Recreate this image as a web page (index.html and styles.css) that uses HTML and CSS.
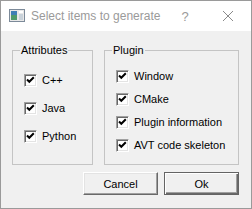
FILE: index.html
```html
<!DOCTYPE html>
<html lang="en">
<head>
  <meta charset="UTF-8">
  <title>Select items to generate</title>
  <link rel="stylesheet" href="styles.css">
</head>
<body>
  <div class="window">
    <div class="titlebar">
      <svg class="app-icon" width="16" height="13" viewBox="0 0 16 13">
        <rect x="0.5" y="0.5" width="15" height="12" fill="#e8e8e8" stroke="#7c8a99"/>
        <rect x="2" y="2" width="6" height="9" fill="#3f7fb5"/>
        <rect x="2" y="6" width="6" height="5" fill="#4f9a6a"/>
        <rect x="10" y="2" width="4" height="2" fill="#ffffff"/>
        <rect x="10" y="5" width="4" height="6" fill="#c9d2da"/>
      </svg>
      <span class="title">Select items to generate</span>
      <span class="help">?</span>
      <svg class="close" width="12" height="12" viewBox="0 0 12 12">
        <path d="M1 1 L11 11 M11 1 L1 11" stroke="#8a8a8a" stroke-width="1"/>
      </svg>
    </div>

    <div class="content">
      <div class="groups">
        <div class="group group-attr">
          <span class="group-title">Attributes</span>
          <div class="options options-attr">
            <label class="option"><span class="check"></span>C++</label>
            <label class="option"><span class="check"></span>Java</label>
            <label class="option"><span class="check"></span>Python</label>
          </div>
        </div>
        <div class="group group-plugin">
          <span class="group-title">Plugin</span>
          <div class="options options-plugin">
            <label class="option"><span class="check"></span>Window</label>
            <label class="option"><span class="check"></span>CMake</label>
            <label class="option"><span class="check"></span>Plugin information</label>
            <label class="option"><span class="check"></span>AVT code skeleton</label>
          </div>
        </div>
      </div>

      <div class="buttons">
        <button class="btn">Cancel</button>
        <button class="btn btn-default">Ok</button>
      </div>
    </div>
  </div>
</body>
</html>
```

FILE: styles.css
```css
body {
  margin: 0;
  font-family: 'Liberation Sans', Arial, sans-serif;
  font-size: 11px;
  color: #000;
  background: #f0f0f0;
}

.window {
  width: 252px;
  height: 209px;
  box-sizing: border-box;
  border: 1px solid #9a9a9a;
  background: #f0f0f0;
}

.titlebar {
  height: 30px;
  background: #ffffff;
  display: flex;
  align-items: center;
}

.app-icon {
  margin-left: 8px;
  margin-top: -1px;
}

.title {
  margin-left: 6px;
  font-size: 12px;
  color: #9a9a9a;
}

.help {
  margin-left: 21px;
  font-size: 13px;
  color: #9a9a9a;
}

.close {
  margin-left: 33px;
  margin-top: -1px;
}

.content {
  padding: 19px 12px 0 11px;
  display: flex;
  flex-direction: column;
}

.groups {
  display: flex;
  gap: 11px;
}

.group {
  height: 115px;
  box-sizing: border-box;
  border: 1px solid #c4c4c4;
  display: flex;
  flex-direction: column;
}

.group-attr {
  width: 81px;
}

.group-plugin {
  flex: 1;
}

.group-title {
  align-self: flex-start;
  margin: -7px 0 0 7px;
  padding: 0 1px;
  line-height: 13px;
  background: #f0f0f0;
}

.options {
  display: flex;
  flex-direction: column;
  padding-left: 11px;
}

.options-attr {
  padding-top: 17px;
  gap: 15px;
}

.options-plugin {
  padding-top: 13px;
  gap: 10px;
}

.option {
  display: flex;
  align-items: center;
  gap: 5px;
  line-height: 13px;
}

.check {
  width: 13px;
  height: 13px;
  box-sizing: border-box;
  border: 1px solid;
  border-color: #a0a0a0 #ffffff #ffffff #a0a0a0;
  box-shadow: inset 1px 1px #696969, inset -1px -1px #e3e3e3;
  background: #ffffff url("data:image/svg+xml,%3Csvg xmlns='http://www.w3.org/2000/svg' width='11' height='11'%3E%3Cpath d='M2 4.5 L4.3 6.8 L8.8 2.3' fill='none' stroke='%23000' stroke-width='2'/%3E%3C/svg%3E") no-repeat 0 0;
}

.buttons {
  display: flex;
  justify-content: flex-end;
  gap: 6px;
  margin-top: 7px;
}

.btn {
  width: 75px;
  height: 23px;
  box-sizing: border-box;
  padding: 0;
  font-family: inherit;
  font-size: 11px;
  color: #000;
  background: #f0f0f0;
  border: 1px solid;
  border-color: #ffffff #696969 #696969 #ffffff;
  box-shadow: inset -1px -1px #a0a0a0, inset 1px 1px #e3e3e3;
}

.btn-default {
  border: 1px solid #646464;
  box-shadow: inset 1px 1px #ffffff, inset -1px -1px #696969, inset -2px -2px #a0a0a0;
}
```
